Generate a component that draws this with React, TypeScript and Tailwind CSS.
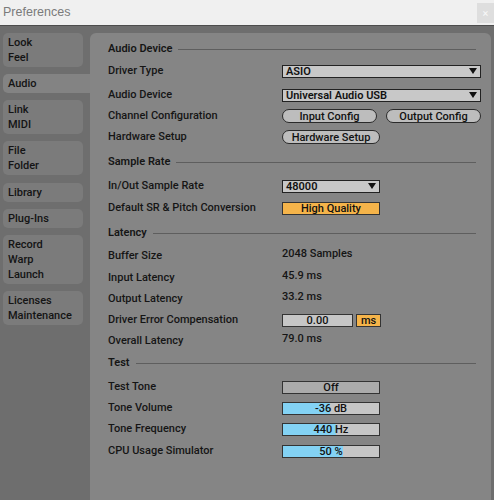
import React from "react";

const font = { fontFamily: "Roboto, 'Noto Sans', sans-serif" };

type Tab = { lines: string[]; h: number; mt: number; sel?: boolean };

const tabs: Tab[] = [
  { lines: ["Look", "Feel"], h: 34, mt: 0 },
  { lines: ["Audio"], h: 19, mt: 7, sel: true },
  { lines: ["Link", "MIDI"], h: 34, mt: 7 },
  { lines: ["File", "Folder"], h: 34, mt: 7 },
  { lines: ["Library"], h: 19, mt: 8 },
  { lines: ["Plug-Ins"], h: 19, mt: 7 },
  { lines: ["Record", "Warp", "Launch"], h: 49, mt: 7 },
  { lines: ["Licenses", "Maintenance"], h: 34, mt: 7 },
];

function Arrow() {
  return (
    <svg width="8" height="6" viewBox="0 0 8 6" className="shrink-0">
      <path d="M0 0 H8 L4 6 Z" fill="#111" />
    </svg>
  );
}

function Dropdown({ value, w }: { value: string; w: string }) {
  return (
    <div
      className={`${w} h-[13px] border border-[#222] bg-[#c8c8c8] flex items-center justify-between pl-[3px] pr-[3px] text-[11px] font-semibold text-[#111] leading-none`}
    >
      <span>{value}</span>
      <Arrow />
    </div>
  );
}

function Pill({ label, w }: { label: string; w: string }) {
  return (
    <div
      className={`${w} h-[14px] rounded-full border border-[#2a2a2a] bg-[#bdbdbd] flex items-center justify-center text-[11px] font-medium text-[#111] leading-none`}
    >
      {label}
    </div>
  );
}

function Box({
  label,
  w,
  bg,
  fill,
}: {
  label: string;
  w: string;
  bg: string;
  fill?: number;
}) {
  return (
    <div
      className={`${w} ${bg} relative h-[13px] border border-[#333] flex items-center justify-center text-[11px] font-medium text-[#111] leading-none overflow-hidden`}
    >
      {fill !== undefined && (
        <div
          className="absolute left-0 top-0 bottom-0 bg-[#83d2f4]"
          style={{ width: `${fill}%` }}
        />
      )}
      <span className="relative">{label}</span>
    </div>
  );
}

function Header({ title, mt }: { title: string; mt: string }) {
  return (
    <div className={`${mt} h-[20px] flex items-center pr-[15px]`}>
      <span className="text-[11px] font-semibold text-[#151515] whitespace-nowrap">
        {title}
      </span>
      <div className="ml-[6px] flex-1 h-px bg-[#5e5e5e]" />
    </div>
  );
}

function Row({
  label,
  mt,
  children,
}: {
  label: string;
  mt: string;
  children?: React.ReactNode;
}) {
  return (
    <div className={`${mt} h-[20px] flex items-center`}>
      <div className="w-[174px] shrink-0 text-[11px] font-medium text-[#151515] whitespace-nowrap">
        {label}
      </div>
      <div className="flex items-center gap-[9px]">{children}</div>
    </div>
  );
}

function Value({ v }: { v: string }) {
  return (
    <span className="text-[11px] font-medium text-[#151515] -translate-y-[2px] inline-block">
      {v}
    </span>
  );
}

export default function App() {
  return (
    <div
      className="w-[494px] h-[500px] overflow-hidden flex flex-col bg-[#6e6e6e]"
      style={font}
    >
      <div className="h-[26px] shrink-0 bg-[#f0f0f0] flex items-center justify-between border-b border-[#4d4d4d]">
        <span
          className="pl-[3px] text-[12.5px] text-[#7b7b7b]"
          style={{ fontFamily: "'Liberation Sans', sans-serif" }}
        >
          Preferences
        </span>
        <div className="self-start mt-[3px] w-[17px] h-[20px] bg-[#dedede] flex items-center justify-center text-[11px] text-[#f8f8f8] leading-none">
          ×
        </div>
      </div>
      <div className="flex flex-1 min-h-0">
        <div className="w-[90px] shrink-0 pt-[7px] pl-[3px] flex flex-col">
          {tabs.map((t, i) => (
            <div
              key={i}
              className={`${
                t.sel
                  ? "w-[87px] rounded-l-[5px] bg-[#838383]"
                  : "w-[80px] rounded-[5px] bg-[#7b7b7b]"
              } pl-[5px] flex flex-col justify-center text-[11px] font-medium text-[#141414] leading-[15px]`}
              style={{ height: t.h, marginTop: t.mt }}
            >
              {t.lines.map((l) => (
                <span key={l}>{l}</span>
              ))}
            </div>
          ))}
        </div>
        <div className="flex-1 mt-[7px] mr-[3px] rounded-tl-[6px] rounded-tr-[6px] bg-[#858585] pl-[18px] pt-[6px] flex flex-col">
          <Header title="Audio Device" mt="mt-0" />
          <Row label="Driver Type" mt="mt-[2px]">
            <Dropdown value="ASIO" w="w-[199px]" />
          </Row>
          <Row label="Audio Device" mt="mt-[4px]">
            <Dropdown value="Universal Audio USB" w="w-[199px]" />
          </Row>
          <Row label="Channel Configuration" mt="mt-[1px]">
            <Pill label="Input Config" w="w-[95px]" />
            <Pill label="Output Config" w="w-[95px]" />
          </Row>
          <Row label="Hardware Setup" mt="mt-[1px]">
            <Pill label="Hardware Setup" w="w-[98px]" />
          </Row>
          <Header title="Sample Rate" mt="mt-[5px]" />
          <Row label="In/Out Sample Rate" mt="mt-[4px]">
            <Dropdown value="48000" w="w-[98px]" />
          </Row>
          <Row label="Default SR & Pitch Conversion" mt="mt-[2px]">
            <Box label="High Quality" w="w-[98px]" bg="bg-[#f5b44a]" />
          </Row>
          <Header title="Latency" mt="mt-[5px]" />
          <Row label="Buffer Size" mt="mt-[3px]">
            <Value v="2048 Samples" />
          </Row>
          <Row label="Input Latency" mt="mt-[2px]">
            <Value v="45.9 ms" />
          </Row>
          <Row label="Output Latency" mt="mt-[1px]">
            <Value v="33.2 ms" />
          </Row>
          <Row label="Driver Error Compensation" mt="mt-[1px]">
            <div className="flex gap-[3px]">
              <Box label="0.00" w="w-[71px]" bg="bg-[#c6c6c6]" />
              <Box label="ms" w="w-[25px]" bg="bg-[#f5b44a]" />
            </div>
          </Row>
          <Row label="Overall Latency" mt="mt-[1px]">
            <Value v="79.0 ms" />
          </Row>
          <Header title="Test" mt="mt-[2px]" />
          <Row label="Test Tone" mt="mt-[4px]">
            <Box label="Off" w="w-[98px]" bg="bg-[#ababab]" />
          </Row>
          <Row label="Tone Volume" mt="mt-[1px]">
            <Box label="-36 dB" w="w-[98px]" bg="bg-[#c6c6c6]" fill={49} />
          </Row>
          <Row label="Tone Frequency" mt="mt-[1px]">
            <Box label="440 Hz" w="w-[98px]" bg="bg-[#c6c6c6]" fill={55} />
          </Row>
          <Row label="CPU Usage Simulator" mt="mt-[2px]">
            <Box label="50 %" w="w-[98px]" bg="bg-[#c6c6c6]" fill={62} />
          </Row>
        </div>
      </div>
    </div>
  );
}
